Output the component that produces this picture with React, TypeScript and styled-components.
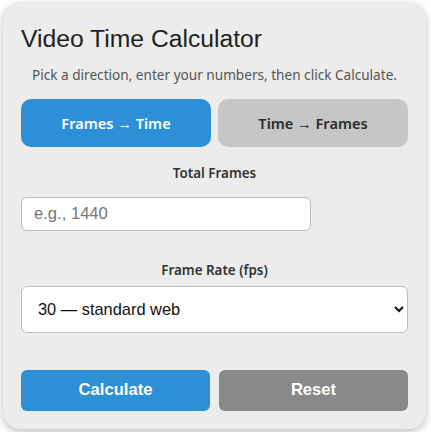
import React, { useState } from "react";
import styled, { createGlobalStyle } from "styled-components";

const GlobalStyle = createGlobalStyle`
  html, body {
    margin: 0;
    padding: 0;
    background: #ffffff;
  }
  body {
    font-family: "Noto Sans", "Open Sans", sans-serif;
  }
`;

const Page = styled.div`
  padding: 2px 5px 4px 3px;
`;

const Card = styled.div`
  background: #ebeceb;
  border-radius: 18px;
  box-shadow: 0 3px 8px rgba(0, 0, 0, 0.25);
  padding: 23px 18px 18px;
  display: flex;
  flex-direction: column;
`;

const Title = styled.h1`
  margin: 0;
  font-family: "Liberation Sans", Arial, sans-serif;
  font-size: 24.7px;
  font-weight: 400;
  line-height: 27.6px;
  color: #1f1f1f;
`;

const Subtitle = styled.p`
  margin: 12px 0 0;
  font-size: 13.6px;
  line-height: 20px;
  color: #555555;
  text-align: center;
`;

const ToggleRow = styled.div`
  display: grid;
  grid-template-columns: 1fr 1fr;
  gap: 7px;
  margin-top: 14px;
`;

const ToggleButton = styled.button<{ $active: boolean }>`
  height: 48px;
  border: none;
  border-radius: 10px;
  font-family: "Noto Sans", "Open Sans", sans-serif;
  font-size: 14.6px;
  font-weight: 600;
  cursor: pointer;
  background: ${(p) => (p.$active ? "#2d90d7" : "#c5c6c5")};
  color: ${(p) => (p.$active ? "#ffffff" : "#2b2b2b")};
`;

const Field = styled.div<{ $top: number }>`
  display: flex;
  flex-direction: column;
  margin-top: ${(p) => p.$top}px;
`;

const Label = styled.label<{ $gap: number }>`
  display: block;
  text-align: center;
  font-size: 13.4px;
  font-weight: 600;
  line-height: 20px;
  color: #333333;
  margin-bottom: ${(p) => p.$gap}px;
`;

const NumberInput = styled.input`
  box-sizing: border-box;
  width: 75%;
  height: 34px;
  padding: 0 12px;
  border: 1px solid #bdbdbd;
  border-radius: 6px;
  background: #ffffff;
  font-family: "Liberation Sans", Arial, sans-serif;
  font-size: 16.6px;
  color: #222222;
  &::placeholder {
    color: #767676;
  }
`;

const Select = styled.select`
  box-sizing: border-box;
  width: 100%;
  height: 47px;
  padding: 0 12px;
  border: 1px solid #bdbdbd;
  border-radius: 6px;
  background: #ffffff;
  font-family: "Liberation Sans", Arial, sans-serif;
  font-size: 16.4px;
  color: #111111;
`;

const ActionRow = styled.div`
  display: grid;
  grid-template-columns: 1fr 1fr;
  gap: 9px;
  margin-top: 37px;
`;

const ActionButton = styled.button<{ $variant: "primary" | "muted" }>`
  height: 41px;
  border: none;
  border-radius: 6px;
  font-family: "Liberation Sans", Arial, sans-serif;
  font-size: 16.6px;
  font-weight: 700;
  color: #ffffff;
  cursor: pointer;
  background: ${(p) => (p.$variant === "primary" ? "#2d90d7" : "#898989")};
`;

type Mode = "frames" | "time";

export default function App() {
  const [mode, setMode] = useState<Mode>("frames");
  const [frames, setFrames] = useState("");
  const [fps, setFps] = useState("30");

  return (
    <>
      <GlobalStyle />
      <Page>
        <Card>
          <Title>Video Time Calculator</Title>
          <Subtitle>
            Pick a direction, enter your numbers, then click Calculate.
          </Subtitle>
          <ToggleRow>
            <ToggleButton
              $active={mode === "frames"}
              onClick={() => setMode("frames")}
            >
              Frames → Time
            </ToggleButton>
            <ToggleButton
              $active={mode === "time"}
              onClick={() => setMode("time")}
            >
              Time → Frames
            </ToggleButton>
          </ToggleRow>
          <Field $top={16}>
            <Label $gap={14} htmlFor="frames">
              Total Frames
            </Label>
            <NumberInput
              id="frames"
              type="number"
              placeholder="e.g., 1440"
              value={frames}
              onChange={(e) => setFrames(e.target.value)}
            />
          </Field>
          <Field $top={29}>
            <Label $gap={6} htmlFor="fps">
              Frame Rate (fps)
            </Label>
            <Select id="fps" value={fps} onChange={(e) => setFps(e.target.value)}>
              <option value="24">24 — film</option>
              <option value="25">25 — PAL</option>
              <option value="30">30 — standard web</option>
              <option value="60">60 — smooth</option>
            </Select>
          </Field>
          <ActionRow>
            <ActionButton $variant="primary">Calculate</ActionButton>
            <ActionButton $variant="muted" onClick={() => setFrames("")}>
              Reset
            </ActionButton>
          </ActionRow>
        </Card>
      </Page>
    </>
  );
}
